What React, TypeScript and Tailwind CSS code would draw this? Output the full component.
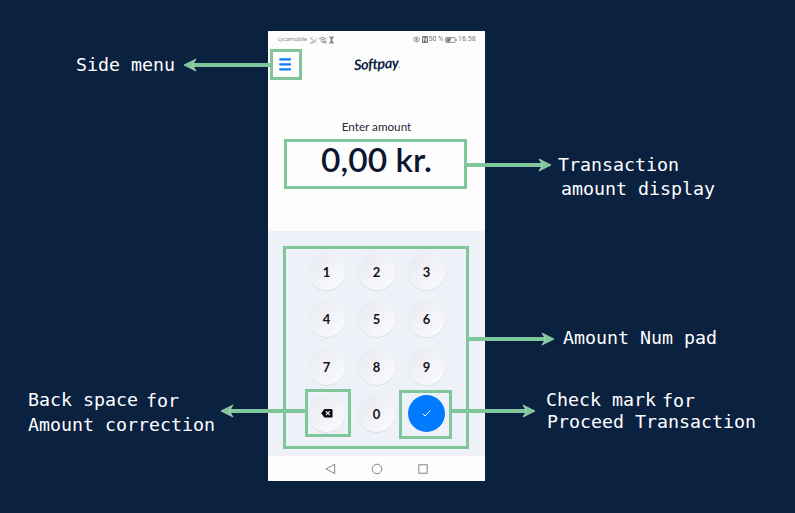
import React from 'react';

type Line = { text: string; className: string };

const mono = "font-['DejaVu_Sans_Mono',monospace]";

function Label({ lines, className }: { lines: Line[]; className: string }) {
  return (
    <div className={`${mono} whitespace-pre text-[18.3px] leading-[25px] text-white ${className}`}>
      {lines.map((l) => (
        <div key={l.text} className={l.className}>{l.text}</div>
      ))}
    </div>
  );
}

function StatusBar() {
  return (
    <div className="flex h-[17px] items-center justify-between pr-[9px] pl-[10px] font-['Roboto',sans-serif] text-[#77777b]">
      <div className="flex items-center">
        <span className="w-[32px] text-[5.8px] text-[#8a8a8e]">Lycamobile</span>
        <svg width="24" height="8" viewBox="0 0 24 8" fill="none" stroke="currentColor" strokeWidth="0.8">
          <path d="M0 7h2.5M0.5 1.5l2 2M2.5 1.5l-2 2M3 7V4.5" />
          <path d="M4.5 7V3.5M6 7V1.5" stroke="#b5b5b8" />
          <path d="M9 2.8q4-3 7.5 0M10.3 4.3q2.5-2 5 0M11.6 5.6q1.2-1 2.4 0l-1.2 1.2zM14.7 5v2.5M16 5v2.5" />
          <path d="M19 1h5M19 7h5" />
          <path d="M19.7 1.2h3.6L22 4l1.3 2.8h-3.6L21 4z" fill="currentColor" stroke="none" />
        </svg>
      </div>
      <div className="flex items-center text-[7px]">
        <svg width="7" height="7" viewBox="0 0 7 7" fill="none" stroke="currentColor" strokeWidth="0.7">
          <path d="M0 3.5q3.5-4 7 0q-3.5 4-7 0M3.5 0.5v1M1 1.2l.8 1M6 1.2l-.8 1M3.5 5.5V6.5M1 5.8l.8-1M6 5.8l-.8-1" />
          <circle cx="3.5" cy="3.5" r="0.7" fill="currentColor" />
        </svg>
        <svg className="ml-[2px]" width="6" height="7" viewBox="0 0 6 7">
          <rect width="6" height="7" rx="0.7" fill="currentColor" />
          <path d="M1.5 5.7V1.6l3 3.8V1.3" fill="none" stroke="#fff" strokeWidth="0.8" />
        </svg>
        <span className="ml-[1px] w-[16px] whitespace-nowrap">50 %</span>
        <svg width="12" height="6" viewBox="0 0 12 6" fill="none" stroke="currentColor" strokeWidth="0.8">
          <rect x="0.5" y="0.5" width="9.6" height="5" rx="1" />
          <path d="M11.3 2v2" />
          <path d="M1.5 1.3h4.8L5 4.7H1.5z" fill="currentColor" stroke="none" />
        </svg>
        <span className="ml-[1.5px] w-[18px] text-[7px]">16.58</span>
      </div>
    </div>
  );
}

function Key({ children }: { children: React.ReactNode }) {
  return (
    <div className="flex size-[37px] items-center justify-center rounded-full bg-linear-to-br from-[#e6e9f1] to-[#fcfcfd] shadow-[0_1px_1px_#d9dce2]">
      {children}
    </div>
  );
}

function Digit({ value }: { value: string }) {
  return <span className="pt-px leading-4">{value}</span>;
}

function Keypad() {
  return (
    <div className="grid h-[225px] grid-cols-[repeat(3,37px)] content-start justify-center gap-x-[13px] gap-y-[10.5px] bg-[#eef1f7] pt-[21.5px] font-['Lato',sans-serif] text-[13px] font-bold text-[#111318]">
      {['1', '2', '3', '4', '5', '6', '7', '8', '9'].map((n) => (
        <Key key={n}><Digit value={n} /></Key>
      ))}
      <Key>
        <svg width="12" height="9" viewBox="0 0 12 9">
          <path d="M3.4 0H10.3Q11.5 0 11.5 1.2V7.3Q11.5 8.5 10.3 8.5H3.4L0.3 4.25z" fill="#050608" />
          <path d="M4.8 2.2l4 4M8.8 2.2l-4 4" stroke="#fff" strokeWidth="1.1" />
        </svg>
      </Key>
      <Key><Digit value="0" /></Key>
      <div className="flex size-[37px] items-center justify-center rounded-full bg-[#007bff]">
        <svg width="9" height="7" viewBox="0 0 9 7" fill="none" stroke="#fff" strokeWidth="1">
          <path d="M0.7 3.7L3 6L8.3 0.7" />
        </svg>
      </div>
    </div>
  );
}

function MenuIcon() {
  return (
    <svg width="12" height="13" viewBox="0 0 12 13" stroke="#0a7cf5" strokeWidth="2.3" strokeLinecap="round">
      <path d="M1.2 1.3h9.8M1.2 6.3h9.8M1.2 11.3h9.8" />
    </svg>
  );
}

function Phone() {
  return (
    <div className="mt-[31px] flex h-[450px] w-[217px] flex-col bg-[#fdfdfd]">
      <StatusBar />
      <div className="grid h-[33px] grid-cols-[1fr_auto_1fr] items-center pl-[11px] pr-[11px]">
        <MenuIcon />
        <div className="mt-[2px] -rotate-3 font-['Lato',sans-serif] text-[14.5px] leading-4 font-bold tracking-[-0.4px] text-[#0d2343] italic">
          Softpay<span className="text-[6px]">.</span>
        </div>
      </div>
      <div className="flex h-[150px] flex-col items-center pt-[37px] font-['Lato',sans-serif]">
        <div className="text-[11.7px] leading-4 text-[#252b3b]">Enter amount</div>
        <div className="mt-[5px] text-[33.5px] leading-[40px] font-semibold text-[#0d1530]">0,00 kr.</div>
      </div>
      <Keypad />
      <div className="flex h-[25px] items-center justify-between pr-[57.5px] pl-[56.5px]">
        <svg width="11" height="12" viewBox="0 0 11 12" fill="none" stroke="#858585">
          <path d="M9.7 1.2v9.4L1 5.9z" />
        </svg>
        <svg width="12" height="12" viewBox="0 0 12 12" fill="none" stroke="#858585">
          <circle cx="6" cy="6" r="4.8" />
        </svg>
        <svg width="10" height="10" viewBox="0 0 10 10" fill="none" stroke="#858585">
          <rect x="0.8" y="0.8" width="8.4" height="8.4" />
        </svg>
      </div>
    </div>
  );
}

function Annotations() {
  return (
    <svg className="pointer-events-none absolute inset-0" width="795" height="513" viewBox="0 0 795 513">
      <g fill="none" stroke="#7fc69b" strokeWidth="3">
        <rect x="271.5" y="50.5" width="29" height="28" />
        <rect x="285.5" y="140.5" width="180" height="47" />
        <rect x="284.5" y="247.5" width="183" height="200" />
        <rect x="306.5" y="390.5" width="43" height="45" />
        <rect x="400.5" y="391.5" width="50" height="46" />
      </g>
      <g stroke="#7fc69b" strokeWidth="4">
        <path d="M192 65H270M467 165H543M469 339H546M229 411H305M452 411H527" />
      </g>
      <g fill="#7fc69b" stroke="#b5e2c6" strokeWidth="0.7">
        <path d="M184 65L196 59L192.5 65L196 71z" />
        <path d="M221 411L233 405L229.5 411L233 417z" />
        <path d="M551 165L539 159L542.5 165L539 171z" />
        <path d="M554 339L542 333L545.5 339L542 345z" />
        <path d="M535 411L523 405L526.5 411L523 417z" />
      </g>
    </svg>
  );
}

export default function App() {
  return (
    <main className="relative flex h-[513px] w-[795px] overflow-hidden bg-[#0b2140]">
      <section className="flex w-[268px] flex-col">
        <Label className="mt-[52px] ml-[76px]" lines={[{ text: 'Side menu', className: '' }]} />
        <div className={`${mono} mt-[310px] ml-[28px] flex text-[18.3px] leading-[25px] whitespace-pre text-white`}>
          <span>Back space</span>
          <span className="ml-[8px] pt-[2px] leading-[23px]">for</span>
        </div>
        <Label className="ml-[28px]" lines={[{ text: 'Amount correction', className: '' }]} />
      </section>
      <Phone />
      <section className="flex flex-col">
        <Label
          className="mt-[153px] ml-[73px]"
          lines={[
            { text: 'Transaction', className: 'leading-[24px]' },
            { text: 'amount display', className: 'ml-[3px] leading-[24px]' },
          ]}
        />
        <Label className="mt-[124px] ml-[78px]" lines={[{ text: 'Amount Num pad', className: '' }]} />
        <div className={`${mono} mt-[38px] ml-[61px] flex text-[18.3px] leading-[23px] whitespace-pre text-white`}>
          <span>Check mark</span>
          <span className="ml-[6px] pt-[2px] leading-[21px]">for</span>
        </div>
        <Label className="ml-[62px]" lines={[{ text: 'Proceed Transaction', className: 'leading-[22px]' }]} />
      </section>
      <Annotations />
    </main>
  );
}
